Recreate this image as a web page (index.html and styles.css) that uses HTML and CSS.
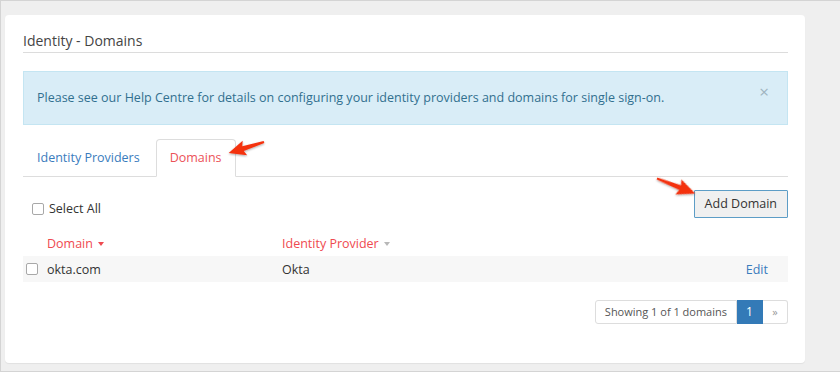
FILE: index.html
```html
<!DOCTYPE html>
<html lang="en">
<head>
    <meta charset="UTF-8">
    <title>Identity - Domains</title>
    <link rel="stylesheet" href="styles.css">
</head>
<body>
    <div class="frame">
        <div class="card">
            <h1 class="titulo">Identity - Domains</h1>

            <div class="alerta">
                <p>Please see our Help Centre for details on configuring your identity providers and domains for single sign-on.</p>
                <span class="cerrar">&times;</span>
            </div>

            <ul class="tabs">
                <li class="tab"><a href="#">Identity Providers</a></li>
                <li class="tab activa"><a href="#">Domains</a></li>
            </ul>

            <div class="barra">
                <label class="select-all"><input type="checkbox" class="check"> Select All</label>
                <button class="boton-add">Add Domain</button>
            </div>

            <div class="tabla">
                <div class="fila cabecera">
                    <span></span>
                    <span class="orden">Domain <i class="caret"></i></span>
                    <span class="orden">Identity Provider <i class="caret gris"></i></span>
                    <span></span>
                </div>
                <div class="fila dato">
                    <span><input type="checkbox" class="check"></span>
                    <span>okta.com</span>
                    <span>Okta</span>
                    <a href="#" class="editar">Edit</a>
                </div>
            </div>

            <div class="paginacion">
                <span class="pag-info">Showing 1 of 1 domains</span>
                <span class="pag-num activa">1</span>
                <span class="pag-num">&raquo;</span>
            </div>
        </div>

        <!-- flechas de anotacion -->
        <svg class="flechas" width="840" height="372" viewBox="0 0 840 372">
            <defs>
                <filter id="sombra" x="-20%" y="-50%" width="140%" height="200%">
                    <feDropShadow dx="0" dy="1" stdDeviation="0.8" flood-color="#000" flood-opacity="0.35"/>
                </filter>
            </defs>
            <g filter="url(#sombra)" fill="#f4300f">
                <polygon transform="translate(263 141) rotate(162.6)" points="0,-1 22,-2.5 20,-7.5 37,0 20,7.5 22,2.5 0,1"/>
                <polygon transform="translate(656 177.5) rotate(21.5)" points="0,-1 25,-2.5 23,-8 41,0 23,8 25,2.5 0,1"/>
            </g>
        </svg>
    </div>
</body>
</html>
```

FILE: styles.css
```css
html, body {
    margin: 0;
    padding: 0;
}

body {
    font-family: 'Open Sans', sans-serif;
    font-size: 12.5px;
    color: #333;
    background-color: #efefef;
}

.frame {
    position: relative;
    box-sizing: border-box;
    height: 372px;
    padding: 14px 35px 0 4px;
    border-top: 1px solid #d4d4d4;
    border-left: 1px solid #d4d4d4;
    border-bottom: 1px solid #d4d4d4;
}

.card {
    width: 800px;
    box-sizing: border-box;
    background-color: #ffffff;
    border-radius: 4px;
    padding: 14px 17px 39px 18px;
    box-shadow: 0 1px 1px rgba(0, 0, 0, 0.06);
}

.titulo {
    margin: 0;
    font-size: 14px;
    font-weight: 400;
    line-height: 20px;
    color: #444;
    padding: 2px 0 1px;
    border-bottom: 1px solid #dcdcdc;
}

.alerta {
    display: flex;
    justify-content: space-between;
    align-items: flex-start;
    margin-top: 18px;
    padding: 16px 18px 16px 13px;
    background-color: #d9edf7;
    border: 1px solid #c4e5f2;
    color: #31708f;
}

.alerta p {
    margin: 0;
    line-height: 20px;
}

.cerrar {
    font-size: 17px;
    line-height: 16px;
    color: #9fb4bf;
    margin-top: -4px;
}

.tabs {
    display: flex;
    list-style: none;
    margin: 14px 0 0;
    padding: 0;
    border-bottom: 1px solid #dddddd;
}

.tab {
    margin-right: 2px;
    margin-bottom: -1px;
}

.tab a {
    display: block;
    padding: 8px 13px;
    line-height: 20px;
    color: #3a7cbd;
    text-decoration: none;
    border: 1px solid transparent;
    border-radius: 4px 4px 0 0;
}

.tab.activa a {
    color: #ec5258;
    background-color: #ffffff;
    border-color: #dddddd;
    border-bottom-color: #ffffff;
}

.barra {
    display: flex;
    justify-content: space-between;
    align-items: flex-start;
    margin-top: 13px;
}

.select-all {
    display: flex;
    align-items: center;
    gap: 5px;
    margin: 10px 0 0 9px;
    line-height: 18px;
    color: #333;
}

.check {
    appearance: none;
    -webkit-appearance: none;
    width: 12px;
    height: 12px;
    margin: 0;
    border: 1px solid #a8a8a8;
    border-radius: 2px;
    background-color: #fff;
    box-sizing: border-box;
}

.boton-add {
    font-family: 'Open Sans', sans-serif;
    font-size: 12.5px;
    color: #333;
    background-color: #f0f0f0;
    border: 1px solid #5d9dc6;
    border-radius: 1px;
    padding: 4px 10px;
    line-height: 18px;
    height: 28px;
    white-space: nowrap;
    cursor: pointer;
}

.tabla {
    margin-top: 12px;
}

.fila {
    display: grid;
    grid-template-columns: 24px 235px 1fr auto;
    align-items: center;
}

.cabecera {
    height: 26px;
}

.orden {
    color: #ef4a50;
}

.caret {
    display: inline-block;
    width: 0;
    height: 0;
    margin-left: 2px;
    vertical-align: middle;
    border-left: 3.5px solid transparent;
    border-right: 3.5px solid transparent;
    border-top: 4px solid #ef4a50;
}

.caret.gris {
    border-top-color: #b8b8b8;
}

.dato {
    height: 26px;
    background-color: #f7f7f7;
}

.dato .check {
    display: block;
    margin-left: 3px;
}

.editar {
    color: #3a7cbd;
    text-decoration: none;
    padding-right: 20px;
}

.paginacion {
    display: flex;
    justify-content: flex-end;
    margin-top: 18px;
    font-size: 11px;
    line-height: 22px;
    white-space: nowrap;
}

.paginacion span {
    border: 1px solid #dddddd;
    color: #555;
}

.pag-info {
    padding: 0 9px;
    border-radius: 3px 0 0 3px;
}

.pag-num {
    width: 26px;
    text-align: center;
    border-left: none !important;
    box-sizing: border-box;
    font-size: 12px;
}

.pag-num:last-child {
    width: 25px;
    border-radius: 0 3px 3px 0;
    color: #999 !important;
    font-size: 11px;
}

.pag-num.activa {
    background-color: #337ab7;
    border-color: #337ab7 !important;
    color: #ffffff !important;
}

.flechas {
    position: absolute;
    top: 0;
    left: 0;
    pointer-events: none;
}
```
